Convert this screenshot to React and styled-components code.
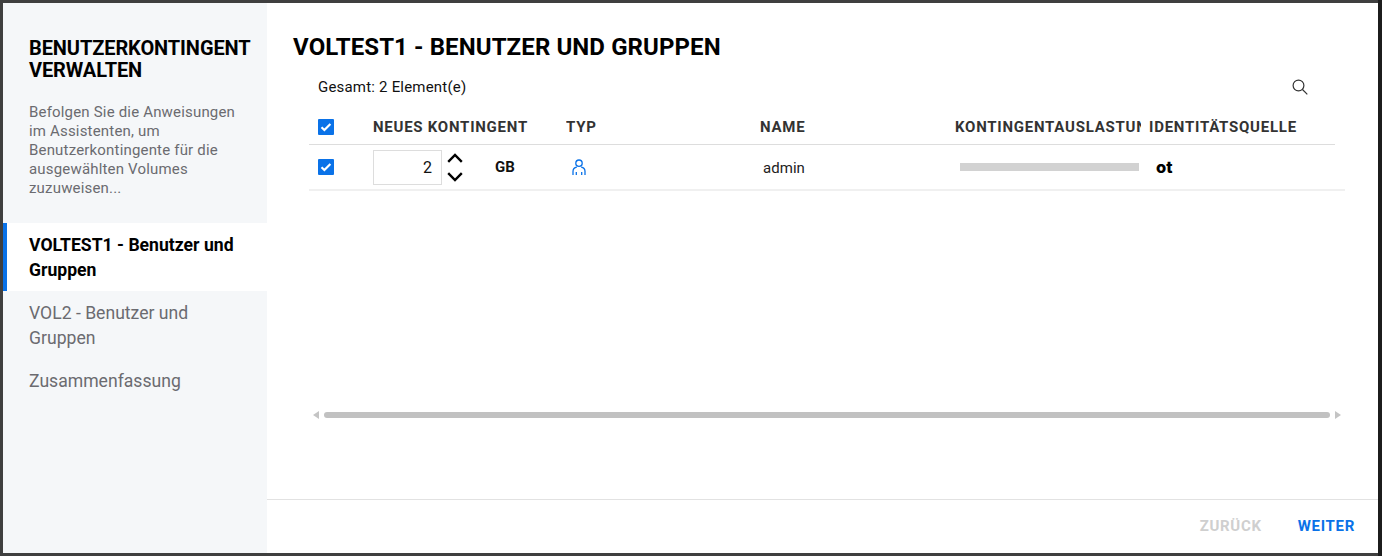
import React from "react";
import styled, { createGlobalStyle } from "styled-components";

const Global = createGlobalStyle`
  html, body { margin: 0; padding: 0; height: 100%; }
  body { font-family: Roboto, "Liberation Sans", sans-serif; overflow: hidden; }
  * { box-sizing: border-box; }
`;

const Backdrop = styled.div`
  width: 1382px;
  height: 556px;
  padding: 3px 0 3px 3px;
  background: #3f3f3f;
  border-right: 4px solid #1c1c1c;
`;

const Dialog = styled.div`
  display: flex;
  height: 100%;
  background: #fff;
`;

const Sidebar = styled.aside`
  width: 264px;
  flex: none;
  background: #f5f7f9;
  padding-top: 34px;
`;

const WizardTitle = styled.h2`
  margin: 0;
  padding: 0 0 0 26px;
  font-size: 20px;
  line-height: 22px;
  font-weight: 700;
  letter-spacing: -0.1px;
  color: #000;
  text-transform: uppercase;
`;

const WizardText = styled.p`
  margin: 21.6px 0 0;
  padding: 0 28px 0 26px;
  font-size: 15px;
  line-height: 19px;
  letter-spacing: 0.18px;
  color: #6b6b70;
`;

const Steps = styled.nav`
  margin-top: 25.4px;
`;

const Step = styled.div`
  padding: 10px 24px 8px ${(p) => (p.$active ? "22px" : "26px")};
  font-size: 17.6px;
  line-height: 25px;
  font-weight: ${(p) => (p.$active ? 700 : 400)};
  color: ${(p) => (p.$active ? "#000" : "#6b6b70")};
  background: ${(p) => (p.$active ? "#fff" : "transparent")};
  border-left: ${(p) => (p.$active ? "4px solid #0a72e8" : "0")};
`;

const Main = styled.main`
  flex: 1;
  display: flex;
  flex-direction: column;
  min-width: 0;
`;

const Content = styled.div`
  flex: 1;
  padding: 30px 0 0 26px;
`;

const PageTitle = styled.h1`
  margin: 0;
  font-size: 24px;
  line-height: 28px;
  font-weight: 700;
  letter-spacing: 0.1px;
  color: #000;
`;

const Toolbar = styled.div`
  display: flex;
  align-items: center;
  justify-content: space-between;
  height: 26px;
  margin-top: 13px;
  padding: 0 70px 0 25px;
  font-size: 15px;
  letter-spacing: 0.2px;
  color: #111;
`;

const Table = styled.div`
  margin-left: 16px;
  width: 1036px;
  height: 303px;
  margin-top: 9px;
`;

const columns = "64px 193px 194px 195px 194px 1fr";

const HeadRow = styled.div`
  display: grid;
  grid-template-columns: ${columns};
  align-items: center;
  width: 1026px;
  height: 36px;
  border-bottom: 1px solid #ddd;
`;

const HeadCell = styled.div`
  max-width: calc(100% - 8px);
  font-size: 15px;
  font-weight: 700;
  letter-spacing: 0.75px;
  color: #333;
  white-space: nowrap;
  overflow: hidden;
`;

const BodyRow = styled.div`
  display: grid;
  grid-template-columns: ${columns};
  align-items: center;
  height: 46px;
  border-bottom: 2px solid #f0f0f0;
`;

const Box = styled.span`
  display: flex;
  align-items: center;
  justify-content: center;
  width: 16px;
  height: 16px;
  margin-left: 9px;
  border-radius: 1px;
  background: #0a72e8;
`;

const QuotaCell = styled.div`
  display: flex;
  align-items: center;
`;

const QuotaInput = styled.div`
  width: 69px;
  height: 35px;
  padding-right: 9px;
  border: 1px solid #ddd;
  text-align: right;
  font-size: 16px;
  line-height: 34px;
  color: #111;
`;

const Spinner = styled.div`
  display: flex;
  flex-direction: column;
  gap: 9px;
  margin-left: 5px;
`;

const Unit = styled.span`
  margin-left: 32px;
  font-size: 15px;
  font-weight: 700;
  color: #111;
`;

const TypeCell = styled.div`
  display: flex;
  padding-left: 6px;
`;

const NameCell = styled.div`
  padding: 1px 0 0 3px;
  font-size: 15px;
  letter-spacing: 0.05px;
  color: #222;
`;

const UsageBar = styled.div`
  width: 179px;
  height: 8px;
  margin-left: 5px;
  background: #d2d2d2;
`;

const Source = styled.div`
  padding-left: 7px;
  font-family: Inter, Roboto, sans-serif;
  font-size: 16.5px;
  font-weight: 800;
  color: #000;
`;

const ScrollBar = styled.div`
  display: flex;
  align-items: center;
  width: 1028px;
  height: 6px;
  margin-left: 20px;
`;

const Thumb = styled.div`
  flex: 1;
  height: 6px;
  margin: 0 5px;
  border-radius: 3px;
  background: #c1c1c1;
`;

const Arrow = styled.span`
  width: 0;
  height: 0;
  border-top: 4px solid transparent;
  border-bottom: 4px solid transparent;
  border-${(p) => (p.$right ? "left" : "right")}: 6px solid #c4c4c4;
`;

const Footer = styled.footer`
  display: flex;
  align-items: center;
  justify-content: flex-end;
  gap: 36px;
  height: 54px;
  padding: 0 23px 1px 0;
  border-top: 1px solid #e2e2e2;
`;

const FooterButton = styled.button`
  padding: 0;
  border: 0;
  background: none;
  font-family: inherit;
  font-size: 15px;
  font-weight: 700;
  letter-spacing: 0.7px;
  color: ${(p) => (p.disabled ? "#cfcfcf" : "#0a72e8")};
`;

const Check = () => (
  <svg width="12" height="10" viewBox="0 0 12 10" fill="none">
    <path d="M1.5 5.2 4.400 8l6-6" stroke="#fff" strokeWidth="2.2" />
  </svg>
);

const Chevron = ({ up }) => (
  <svg width="16" height="10" viewBox="0 0 16 10" fill="none">
    <path d={up ? "M1.200 8.800 8 2l6.800 6.800" : "M1.200 1.200 8 8l6.800-6.800"} stroke="#000" strokeWidth="2.4" />
  </svg>
);

const UserIcon = () => (
  <svg width="14" height="17" viewBox="0 0 14 17" fill="none" stroke="#0a72e8" strokeWidth="1.300">
    <circle cx="7" cy="4.200" r="3.200" />
    <path d="M1 16v-3.500C1 9.800 3 8.500 4.800 8.200M13 16v-3.500c0-2.700-2-4-3.800-4.300M4.300 16v-3M9.700 16v-3" />
  </svg>
);

const SearchIcon = () => (
  <svg width="16" height="16" viewBox="0 0 16 16" fill="none" stroke="#333" strokeWidth="1.200">
    <circle cx="6.500" cy="6.500" r="5.400" />
    <path d="m10.500 10.500 4.800 4.800" />
  </svg>
);

export default function App() {
  return (
    <Backdrop>
      <Global />
      <Dialog>
        <Sidebar>
          <WizardTitle>Benutzerkontingent verwalten</WizardTitle>
          <WizardText>
            Befolgen Sie die Anweisungen im Assistenten, um Benutzerkontingente für die ausgewählten Volumes zuzuweisen...
          </WizardText>
          <Steps>
            <Step $active>VOLTEST1 - Benutzer und Gruppen</Step>
            <Step>VOL2 - Benutzer und Gruppen</Step>
            <Step>Zusammenfassung</Step>
          </Steps>
        </Sidebar>
        <Main>
          <Content>
            <PageTitle>VOLTEST1 - BENUTZER UND GRUPPEN</PageTitle>
            <Toolbar>
              <span>Gesamt: 2 Element(e)</span>
              <SearchIcon />
            </Toolbar>
            <Table>
              <HeadRow>
                <Box><Check /></Box>
                <HeadCell>NEUES KONTINGENT</HeadCell>
                <HeadCell>TYP</HeadCell>
                <HeadCell>NAME</HeadCell>
                <HeadCell>KONTINGENTAUSLASTUNG</HeadCell>
                <HeadCell>IDENTITÄTSQUELLE</HeadCell>
              </HeadRow>
              <BodyRow>
                <Box><Check /></Box>
                <QuotaCell>
                  <QuotaInput>2</QuotaInput>
                  <Spinner>
                    <Chevron up />
                    <Chevron />
                  </Spinner>
                  <Unit>GB</Unit>
                </QuotaCell>
                <TypeCell><UserIcon /></TypeCell>
                <NameCell>admin</NameCell>
                <UsageBar />
                <Source>ot</Source>
              </BodyRow>
            </Table>
            <ScrollBar>
              <Arrow />
              <Thumb />
              <Arrow $right />
            </ScrollBar>
          </Content>
          <Footer>
            <FooterButton disabled>ZURÜCK</FooterButton>
            <FooterButton>WEITER</FooterButton>
          </Footer>
        </Main>
      </Dialog>
    </Backdrop>
  );
}
